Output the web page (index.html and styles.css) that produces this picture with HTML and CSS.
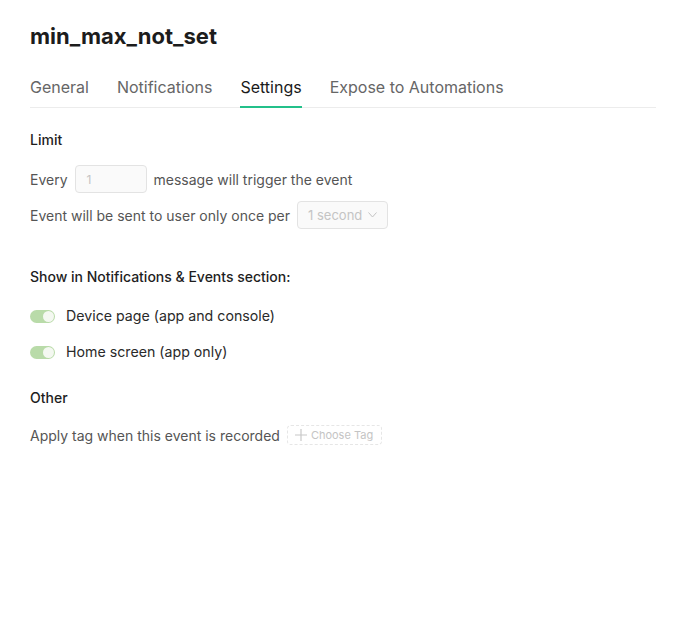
FILE: index.html
```html
<!DOCTYPE html>
<html>
<head>
<meta charset="utf-8">
<link rel="stylesheet" href="styles.css">
</head>
<body>
<div class="page">
  <h1 class="title">min_max_not_set</h1>
  <nav class="tabs">
    <span class="tab">General</span>
    <span class="tab">Notifications</span>
    <span class="tab active">Settings</span>
    <span class="tab">Expose to Automations</span>
  </nav>

  <section class="section">
    <h2 class="heading">Limit</h2>
    <div class="row row-every">
      <span>Every</span>
      <span class="input">1</span>
      <span>message will trigger the event</span>
    </div>
    <div class="row row-once">
      <span>Event will be sent to user only once per</span>
      <span class="select">1 second
        <svg width="9" height="6" viewBox="0 0 9 6"><path d="M0.5 0.5 L4.5 5 L8.5 0.5" fill="none" stroke="#c4c4c4" stroke-width="1"/></svg>
      </span>
    </div>
  </section>

  <section class="section section-show">
    <h2 class="heading">Show in Notifications &amp; Events section:</h2>
    <div class="toggle-row">
      <span class="toggle"><span class="knob"></span></span>
      <span>Device page (app and console)</span>
    </div>
    <div class="toggle-row">
      <span class="toggle"><span class="knob"></span></span>
      <span>Home screen (app only)</span>
    </div>
  </section>

  <section class="section section-other">
    <h2 class="heading">Other</h2>
    <div class="row row-tag">
      <span>Apply tag when this event is recorded</span>
      <span class="tag-btn">
        <svg width="12" height="12" viewBox="0 0 12 12"><path d="M6 0 V12 M0 6 H12" stroke="#c8c8c8" stroke-width="1.2"/></svg>
        Choose Tag
      </span>
    </div>
  </section>
</div>
</body>
</html>
```

FILE: styles.css
```css
html, body {
  margin: 0;
  padding: 0;
  background: #ffffff;
}
body {
  font-family: Inter, "Noto Sans", "Liberation Sans", sans-serif;
  color: #555555;
}
.page {
  padding: 22px 27px 0 30px;
}
.title {
  margin: 0;
  font-size: 22px;
  font-weight: 700;
  color: #1c1c1c;
  line-height: 28px;
}
.tabs {
  display: flex;
  gap: 28px;
  margin-top: 21px;
  border-bottom: 1px solid #ececec;
}
.tab {
  font-size: 16px;
  color: #666666;
  padding: 6px 0 9px;
  line-height: 20px;
  border-bottom: 2px solid transparent;
  margin-bottom: -1px;
}
.tab.active {
  color: #1a1a1a;
  border-bottom-color: #23c08a;
}
.section {
  margin-top: 23px;
}
.heading {
  margin: 0;
  font-size: 14px;
  font-weight: 500;
  color: #1e1e1e;
  line-height: 18px;
}
.row {
  display: flex;
  align-items: center;
  gap: 7px;
  font-size: 14px;
  color: #555555;
}
.row-every {
  margin-top: 16px;
}
.row-once {
  margin-top: 8px;
}
.input {
  width: 72px;
  height: 28px;
  box-sizing: border-box;
  border: 1px solid #e3e3e3;
  border-radius: 4px;
  background: #fafafa;
  padding: 0 11px;
  font-size: 12px;
  color: #c4c4c4;
  display: flex;
  align-items: center;
}
.select {
  width: 91px;
  height: 28px;
  box-sizing: border-box;
  border: 1px solid #e3e3e3;
  border-radius: 4px;
  background: #fafafa;
  padding: 0 10px 0 10px;
  font-size: 13px;
  color: #c4c4c4;
  display: flex;
  align-items: center;
  justify-content: space-between;
}
.section-show {
  margin-top: 39px;
}
.toggle-row {
  display: flex;
  align-items: center;
  gap: 11px;
  font-size: 14.2px;
  color: #2a2a2a;
  margin-top: 21px;
  line-height: 18px;
}
.toggle-row + .toggle-row {
  margin-top: 18px;
}
.toggle {
  width: 25px;
  height: 13px;
  border-radius: 7px;
  background: #b9dba9;
  position: relative;
  flex: none;
}
.knob {
  position: absolute;
  right: 1px;
  top: 1px;
  width: 11px;
  height: 11px;
  border-radius: 50%;
  background: #f4f8f1;
}
.section-other {
  margin-top: 28px;
}
.row-tag {
  margin-top: 18px;
}
.tag-btn {
  display: flex;
  align-items: center;
  gap: 4px;
  height: 20px;
  box-sizing: border-box;
  padding: 0 8px 0 7px;
  border: 1px dashed #e6e6e6;
  border-radius: 4px;
  font-size: 11px;
  color: #c4c4c4;
}
```
